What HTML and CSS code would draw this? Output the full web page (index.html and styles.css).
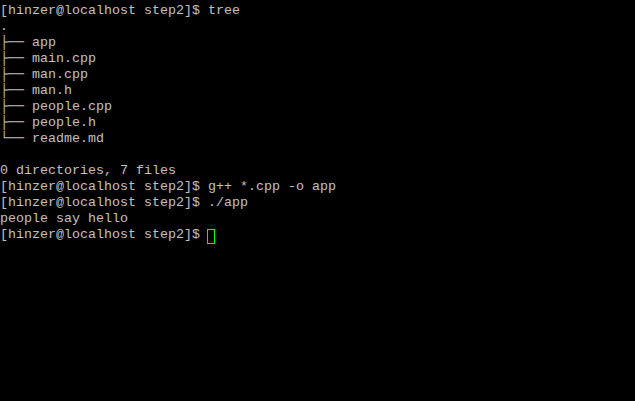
FILE: index.html
```html
<!DOCTYPE html>
<html>
<head>
<meta charset="utf-8">
<link rel="stylesheet" href="styles.css">
</head>
<body>
<pre class="term">[hinzer@localhost step2]$ tree
.
├── app
├── main.cpp
├── man.cpp
├── man.h
├── people.cpp
├── people.h
└── readme.md

0 directories, 7 files
[hinzer@localhost step2]$ g++ *.cpp -o app
[hinzer@localhost step2]$ ./app
people say hello
[hinzer@localhost step2]$ <span class="cursor"> </span></pre>
</body>
</html>
```

FILE: styles.css
```css
html, body {
  margin: 0;
  padding: 0;
  background: #000;
  width: 635px;
  height: 401px;
  overflow: hidden;
}
.term {
  margin: 0;
  padding: 3px 0 0 0;
  font-family: "Liberation Mono", "DejaVu Sans Mono", monospace;
  font-size: 13.333px;
  line-height: 16px;
  color: #c0c0c0;
  white-space: pre;
}
.cursor {
  display: inline-block;
  width: 6px;
  height: 13px;
  margin-left: -1px;
  border: 1px solid #00ff00;
  vertical-align: -3px;
}
```
